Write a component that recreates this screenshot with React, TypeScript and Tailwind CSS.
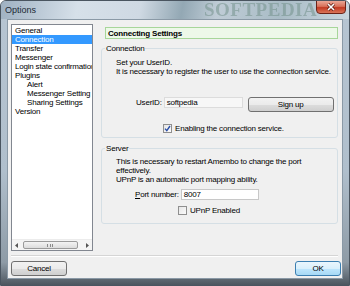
import React from "react";

const items: { label: string; indent?: boolean; selected?: boolean }[] = [
  { label: "General" },
  { label: "Connection", selected: true },
  { label: "Transfer" },
  { label: "Messenger" },
  { label: "Login state confirmation" },
  { label: "Plugins" },
  { label: "Alert", indent: true },
  { label: "Messenger Setting", indent: true },
  { label: "Sharing Settings", indent: true },
  { label: "Version" },
];

function CheckBox({ checked }: { checked?: boolean }) {
  return (
    <span className="w-[9px] h-[9px] border border-[#8f8f8f] bg-gradient-to-br from-[#e6e6e6] to-[#fbfbfb] flex items-center justify-center shrink-0">
      {checked && (
        <svg width="7" height="7" viewBox="0 0 7 7">
          <path d="M1 3.6 L2.8 5.6 L6 1" stroke="#2a4fa8" strokeWidth="1.4" fill="none" />
        </svg>
      )}
    </span>
  );
}

function Button({ children, focused, className }: { children: React.ReactNode; focused?: boolean; className?: string }) {
  return (
    <div
      className={`flex items-center justify-center rounded-[3px] border ${
        focused
          ? "border-[#3c7fb1] bg-[linear-gradient(#eaf6fd_0%,#d9f0fc_50%,#bee6fd_51%,#a7d9f5_100%)]"
          : "border-[#707070] bg-[linear-gradient(#f2f2f2_0%,#ebebeb_50%,#dddddd_51%,#cfcfcf_100%)]"
      } ${className ?? ""}`}
    >
      {children}
    </div>
  );
}

function GroupBox({ title, children, className }: { title: React.ReactNode; children: React.ReactNode; className?: string }) {
  return (
    <div className={`relative border border-[#d5dfe5] rounded-[3px] ${className ?? ""}`}>
      <span className="absolute -top-[5px] left-[3px] bg-[#f0f0f0] px-[1px]">{title}</span>
      {children}
    </div>
  );
}

export default function App() {
  return (
    <div className="w-[350px] h-[286px] flex flex-col overflow-hidden rounded-t-[6px] border border-[#4a5560] bg-[linear-gradient(to_bottom,#b7c5d2_0%,#b0bfcc_60%,#8e9ba6_92%,#4d565f_100%)] font-['Liberation_Sans',Arial,sans-serif] text-[8px] leading-[9px] tracking-[-0.2px] text-black">
      {/* title bar */}
      <div className="relative h-[18px] shrink-0 flex items-center pl-[4px] bg-[linear-gradient(100deg,#9fb1c2_0%,#d6e0e9_22%,#cfd9e3_40%,#93a8b4_52%,#bfccd6_62%,#a9bcc6_80%,#c9d6df_100%)]">
        <span className="text-[9px] tracking-normal text-[#1c2a36]">Options</span>
        <span className="absolute left-[203px] -top-[1px] font-['Liberation_Serif',serif] font-bold text-[19px] leading-[19px] tracking-[0.5px] text-[#6f8d86] opacity-50 blur-[0.7px]">
          SOFTPEDIA
        </span>
        <div className="absolute right-[3px] -top-[1px] w-[30px] h-[14px] rounded-b-[4px] border border-[#6b2318] bg-[linear-gradient(#eba796_0%,#d8715a_45%,#c23a22_55%,#d9755a_100%)] flex items-center justify-center">
          <svg width="10" height="8" viewBox="0 0 10 8">
            <path d="M2 1 L8 7 M8 1 L2 7" stroke="#5a1a10" strokeWidth="3" />
            <path d="M2 1 L8 7 M8 1 L2 7" stroke="#ffffff" strokeWidth="1.6" />
          </svg>
        </div>
      </div>

      {/* client area */}
      <div className="mx-[6px] mb-[6px] flex-1 flex flex-col bg-[#f0f0f0] border border-[#8a99a6]">
        <div className="flex pt-[4px] pl-[3px]">
          {/* tree list */}
          <div className="w-[82px] h-[227px] border border-[#828790] bg-white flex flex-col overflow-hidden">
            <div className="flex-1 pt-[1px]">
              {items.map((it) => (
                <div
                  key={it.label}
                  className={`h-[9px] whitespace-nowrap ${it.indent ? "pl-[15px]" : "pl-[3px]"} ${
                    it.selected ? "bg-[#3399ff] text-white" : ""
                  }`}
                >
                  {it.label}
                </div>
              ))}
            </div>
            <div className="h-[11px] flex items-center bg-[#f4f4f4] border-t border-[#ececec]">
              <span className="w-[10px] flex justify-center">
                <svg width="4" height="5" viewBox="0 0 4 5">
                  <path d="M3 0 L0 2.5 L3 5 Z" fill="#555" />
                </svg>
              </span>
              <div className="ml-[1px] w-[56px] h-[8px] rounded-[2px] border border-[#9a9a9a] bg-[linear-gradient(#f3f3f3,#dcdcdc)] flex items-center justify-center">
                <span className="w-[6px] h-[3px] border-x border-[#8a8a8a] bg-[linear-gradient(90deg,transparent_2px,#8a8a8a_2px,#8a8a8a_3px,transparent_3px)]"></span>
              </div>
              <span className="ml-[4px] w-[10px] flex justify-center">
                <svg width="4" height="5" viewBox="0 0 4 5">
                  <path d="M1 0 L4 2.5 L1 5 Z" fill="#555" />
                </svg>
              </span>
            </div>
          </div>

          {/* right panel */}
          <div className="ml-[8px] w-[237px] flex flex-col">
            <div className="ml-[4px] mt-[3px] h-[12px] border border-[#a7d69a] bg-[#edf8e9] flex items-center pl-[2px] font-bold">
              Connecting Settings
            </div>

            <GroupBox title={<span>Connection</span>} className="mt-[9px] h-[90px] pt-[9px]">
              <div className="pl-[14px]">
                <div>Set your UserID.</div>
                <div>It is necessary to register the user to use the connection service.</div>
              </div>
              <div className="flex items-start mt-[21px] pl-[34px]">
                <span className="leading-[11px]">UserID:</span>
                <div className="ml-[2px] w-[79px] h-[11px] border border-[#dcdcdc] bg-[#f7f7f7] pl-[2px] leading-[9px]">
                  softpedia
                </div>
                <Button className="ml-[5px] w-[86px] h-[15px]">Sign up</Button>
              </div>
              <div className="flex items-center mt-[12px] pl-[61px]">
                <CheckBox checked />
                <span className="ml-[3px]">Enabling the connection service.</span>
              </div>
            </GroupBox>

            <GroupBox title={<span>Server</span>} className="mt-[10px] h-[76px] pt-[8px]">
              <div className="pl-[14px]">
                <div>This is necessary to restart Amembo to change the port</div>
                <div>effectively.</div>
                <div>UPnP is an automatic port mapping ability.</div>
              </div>
              <div className="flex items-start mt-[5px] pl-[33px]">
                <span className="leading-[11px]">
                  <span className="underline">P</span>ort number:
                </span>
                <div className="ml-[2px] w-[78px] h-[11px] border border-[#c8c8c8] bg-white pl-[2px] leading-[9px]">
                  8007
                </div>
              </div>
              <div className="flex items-center mt-[6px] pl-[76px]">
                <CheckBox />
                <span className="ml-[3px]">UPnP Enabled</span>
              </div>
            </GroupBox>
          </div>
        </div>

        {/* separator */}
        <div className="mt-[4px] ml-[3px] mr-[4px] border-t border-[#d5d5d5] border-b border-b-white"></div>

        {/* buttons */}
        <div className="flex justify-between items-start mt-[4px] pl-[3px] pr-[1px]">
          <Button className="w-[56px] h-[15px]">Cancel</Button>
          <Button focused className="w-[46px] h-[15px]">OK</Button>
        </div>
      </div>
    </div>
  );
}
